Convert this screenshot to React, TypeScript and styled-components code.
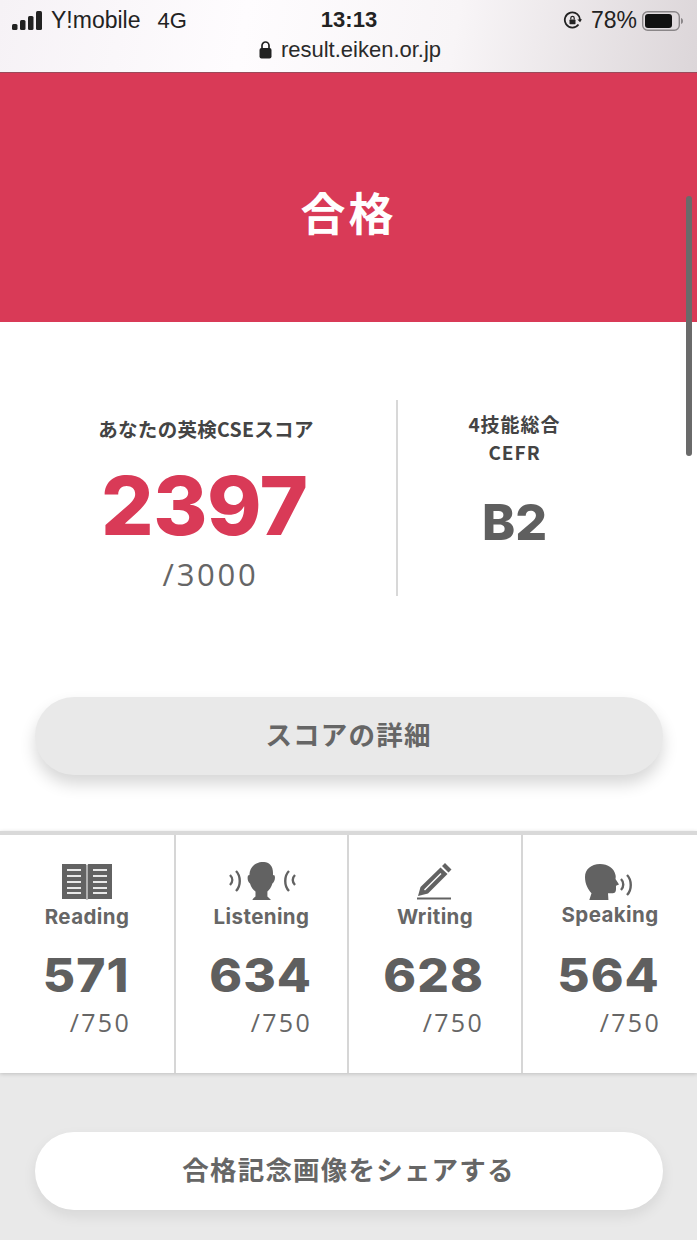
import React from "react";
import styled, { createGlobalStyle } from "styled-components";

const Global = createGlobalStyle`
  html, body { margin: 0; padding: 0; background: #fff; }
  body { font-family: Inter, "Noto Sans CJK JP", sans-serif; }
`;
const Page = styled.div`
  width: 697px; height: 1240px; overflow: hidden; position: relative; background: #fff;
`;
const StatusBar = styled.header`
  height: 73px; box-sizing: border-box; padding-top: 7px;
  background: linear-gradient(100deg, #f6f2f6 0%, #fefcfe 35%, #f8f5f7 65%, #dcd6d9 100%);
  border-bottom: 1px solid #9a4a5a;
  color: #222; font-family: "Liberation Sans", sans-serif;
`;
const StatusRow = styled.div`
  display: grid; grid-template-columns: 1fr auto 1fr; align-items: center; height: 24px; padding: 0 13px 0 12px;
`;
const Left = styled.div`display: flex; align-items: center; font-size: 23px;`;
const Carrier = styled.span`margin-left: 7px; margin-right: 17px;`;
const Net = styled.span`font-size: 22px;`;
const Time = styled.div`font-size: 22px; font-weight: 700; transform: translate(1px, -1px);`;
const Right = styled.div`display: flex; align-items: center; justify-content: flex-end; font-size: 23px;`;
const Percent = styled.span`margin: 0 5px 0 9px;`;
const UrlRow = styled.div`
  display: flex; justify-content: center; align-items: center; gap: 9px; font-size: 22px; margin-top: 7px; height: 24px; color: #2a2a2a;
  padding-left: 3px;
`;
const Banner = styled.div`
  height: 249px; background: #d93a57; color: #fff; display: flex; align-items: center; justify-content: center;
  font: 700 45px "Noto Sans CJK JP", sans-serif; letter-spacing: 3px; padding-top: 28px; box-sizing: border-box;
`;
const ScoreSection = styled.section`
  display: grid; grid-template-columns: 398px 236px; height: 196px; margin-top: 78px;
`;
const ScoreLeft = styled.div`
  border-right: 2px solid #d8d8d8; display: flex; flex-direction: column; align-items: center; padding: 18px 0 0 16px;
`;
const ScoreLabel = styled.div`
  font: 700 19.5px "Noto Sans CJK JP", sans-serif; color: #444; line-height: 24px; letter-spacing: .3px; transform: translateY(-1px);
`;
const BigScore = styled.div`
  font: 800 81px/1 Inter, sans-serif; color: #d93a57; margin-top: 24px; letter-spacing: -.5px; transform: translateX(-2px) scaleX(1.02);
`;
const OutOf = styled.div`
  font: 400 31px/1 "Open Sans", sans-serif; color: #666; letter-spacing: 2.7px; margin-top: 12px; margin-left: 9px;
`;
const ScoreRight = styled.div`
  display: flex; flex-direction: column; align-items: center; padding: 10px 3px 0 0;
`;
const CefrLabel = styled.div`
  font: 700 19px/28px "Noto Sans CJK JP", sans-serif; color: #444; text-align: center; letter-spacing: 1px;
`;
const CefrValue = styled.div`
  font: 800 50px/1 Inter, sans-serif; color: #5f5f5f; margin-top: 31px;
`;
const PillButton = styled.div<{ $alt?: boolean }>`
  width: 628px; height: 78px; margin: 0 auto; padding-bottom: 5px; box-sizing: border-box; border-radius: 39px; display: flex; align-items: center; justify-content: center;
  background: ${(p) => (p.$alt ? "#fff" : "#e9e9e9")};
  color: #666; font: 700 26.5px "Noto Sans CJK JP", sans-serif; letter-spacing: 1.2px;
  box-shadow: ${(p) => (p.$alt ? "0 6px 14px rgba(0,0,0,.08)" : "0 9px 16px rgba(0,0,0,.16)")};
`;
const DetailWrap = styled.div`margin-top: 101px; height: 134px;`;
const Skills = styled.section`
  display: grid; grid-template-columns: 176px 173px 174px 174px; height: 242px; box-sizing: border-box;
  border-top: 4px solid #d9d9d9; position: relative; z-index: 1; background: #fff;
  box-shadow: 0 1px 4px rgba(0,0,0,.18);
`;
const Skill = styled.div<{ $last?: boolean }>`
  border-right: ${(p) => (p.$last ? "0" : "2px solid #d6d6d6")};
  display: flex; flex-direction: column; align-items: center; padding-top: 23px; box-sizing: border-box;
`;
const IconBox = styled.div`height: 42px; display: flex; align-items: flex-end; justify-content: center;`;
const SkillName = styled.div<{ $up?: boolean }>`
  font: 700 20.5px/24px Inter, sans-serif; color: #666; letter-spacing: .4px; margin-top: ${(p) => (p.$up ? "3px" : "5px")};
`;
const SkillScore = styled.div<{ $up?: boolean }>`
  font: 800 46px/1 Inter, sans-serif; color: #5f5f5f; margin-top: ${(p) => (p.$up ? "25px" : "23px")}; letter-spacing: 1px; transform: translateX(-1px) scaleX(1.08);
`;
const SkillMax = styled.div`
  font: 400 25px/1 "Open Sans", sans-serif; color: #666; letter-spacing: 2.3px; align-self: flex-end; margin-top: 12px;
`;
const Footer = styled.section`
  height: 167px; background: #e9e9e9; padding-top: 59px; box-sizing: border-box;
`;
const ScrollThumb = styled.div`
  position: absolute; left: 686px; top: 196px; width: 6px; height: 260px; border-radius: 3px; background: #6a6a6a;
`;

const Signal = () => (
  <svg width="32" height="20" viewBox="0 0 32 20" fill="#222">
    <rect x="0" y="13" width="5.5" height="6" rx="1.5" />
    <rect x="8" y="9" width="5.5" height="10" rx="1.5" />
    <rect x="16" y="5" width="5.5" height="14" rx="1.5" />
    <rect x="24" y="0" width="6" height="19" rx="1.5" />
  </svg>
);
const Rotation = () => (
  <svg width="19" height="19" viewBox="0 0 19 19" fill="none" stroke="#222" strokeWidth="1.8">
    <path d="M15.5 13.5A7.6 7.6 0 1 1 17 9.5" />
    <path d="M14.3 8.6l2.8 2.6 1.9-3" fill="#222" stroke="none" />
    <rect x="6.5" y="8.6" width="6" height="4.6" fill="#222" stroke="none" rx=".6" />
    <path d="M7.8 8.6V7a1.7 1.7 0 0 1 3.4 0v1.6" strokeWidth="1.2" />
  </svg>
);
const Battery = () => (
  <svg width="42" height="20" viewBox="0 0 42 20">
    <rect x=".7" y=".7" width="36.6" height="18.6" rx="5" fill="none" stroke="#8a8688" strokeWidth="1.4" />
    <rect x="3" y="3" width="27" height="14" rx="3" fill="#111" />
    <path d="M39 7c1.5.5 2 1.5 2 3s-.5 2.500-2 3z" fill="#8a8688" />
  </svg>
);
const Lock = () => (
  <svg width="13" height="18" viewBox="0 0 13 18">
    <rect x=".5" y="7" width="12" height="10.500" rx="2" fill="#222" />
    <path d="M3 7.500V4.500a3.500 3.500 0 0 1 7 0v3" fill="none" stroke="#222" strokeWidth="1.700" />
  </svg>
);
const Book = () => (
  <svg width="50" height="36" viewBox="0 0 50 36">
    <path d="M0 0h23.700l.8 1v35l-.8-1H0z" fill="#626262" />
    <path d="M50 0H26.300l-.8 1v35l.8-1H50z" fill="#626262" />
    <g stroke="#e8e8e8" strokeWidth="2">
      <path d="M5 6h14M5 12h14M5 18h14M5 24h14M5 29h14M31 6h14M31 12h14M31 18h14M31 24h14M31 29h14" />
    </g>
  </svg>
);
const Listen = () => (
  <svg width="68" height="38" viewBox="0 0 68 38">
    <path d="M26 3c6-4.500 13-3.500 16-.5 2.500 2.300 3.200 6 3 10.500l1.600.500c1 3-.2 6.500-2.200 8-1 3.500-3 6.500-5 8v5c1.500 1.200 2.800 2.500 4 4H24c.8-1.500 2-3 3.500-4v-5c-2.500-1.800-4.500-4.500-5.500-8-2-1.500-3-5-2-8l1.500-.5C21.300 9 23 5.500 26 3z" fill="#626262" />
    <g fill="none" stroke="#626262" strokeWidth="2.400">
      <path d="M2 13c3 3 3 7 0 10M8 9c5 5 5 15 0 20" />
      <path d="M67 13c-3 3-3 7 0 10M61 9c-5 5-5 15 0 20" />
    </g>
  </svg>
);
const Pencil = () => (
  <svg width="36" height="37" viewBox="0 0 36 37">
    <path d="M28 0l6.500 6.500-3 3-6.500-6.500zM23.500 4.500L30.500 11 11 30.500 1 33 3.500 24z" fill="#626262" />
    <path d="M24 10.500L7.500 27" stroke="#fff" strokeWidth="1.500" />
    <path d="M0 35.500h34" stroke="#626262" strokeWidth="2" />
  </svg>
);
const Speak = () => (
  <svg width="50" height="36" viewBox="0 0 50 36">
    <path d="M15 0c8 0 14 4 15.500 11 .5 2 0 3 0 4l3.500 5.500-3 1.200v3c0 2-.5 3.500-1.500 4-2 .8-4.500.3-6.500.5l.5 7.800H4l2.500-7.800C3 25.500 0 20 0 13 0 5.500 6 0 15 0z" fill="#626262" />
    <g fill="none" stroke="#626262" strokeWidth="2.400">
      <path d="M36 15c3 3 3 8 0 11M42 11c5 5 5 15 0 20" />
    </g>
  </svg>
);

const skills = [
  { name: "Reading", score: 571, icon: <Book />, maxRight: 43 },
  { name: "Listening", score: 634, icon: <Listen />, maxRight: 35 },
  { name: "Writing", score: 628, icon: <Pencil />, maxRight: 37 },
  { name: "Speaking", score: 564, icon: <Speak />, maxRight: 36, up: true },
];

export default function App() {
  return (
    <Page>
      <Global />
      <StatusBar>
        <StatusRow>
          <Left>
            <Signal />
            <Carrier>Y!mobile</Carrier>
            <Net>4G</Net>
          </Left>
          <Time>13:13</Time>
          <Right>
            <Rotation />
            <Percent>78%</Percent>
            <Battery />
          </Right>
        </StatusRow>
        <UrlRow>
          <Lock />
          <span>result.eiken.or.jp</span>
        </UrlRow>
      </StatusBar>
      <Banner>合格</Banner>
      <ScoreSection>
        <ScoreLeft>
          <ScoreLabel>あなたの英検CSEスコア</ScoreLabel>
          <BigScore>2397</BigScore>
          <OutOf>/3000</OutOf>
        </ScoreLeft>
        <ScoreRight>
          <CefrLabel>
            4技能総合
            <br />
            CEFR
          </CefrLabel>
          <CefrValue>B2</CefrValue>
        </ScoreRight>
      </ScoreSection>
      <DetailWrap>
        <PillButton>スコアの詳細</PillButton>
      </DetailWrap>
      <Skills>
        {skills.map((s, i) => (
          <Skill key={s.name} $last={i === 3}>
            <IconBox>{s.icon}</IconBox>
            <SkillName $up={s.up}>{s.name}</SkillName>
            <SkillScore $up={s.up}>{s.score}</SkillScore>
            <SkillMax style={{ marginRight: s.maxRight }}>/750</SkillMax>
          </Skill>
        ))}
      </Skills>
      <Footer>
        <PillButton $alt>合格記念画像をシェアする</PillButton>
      </Footer>
      <ScrollThumb />
    </Page>
  );
}
